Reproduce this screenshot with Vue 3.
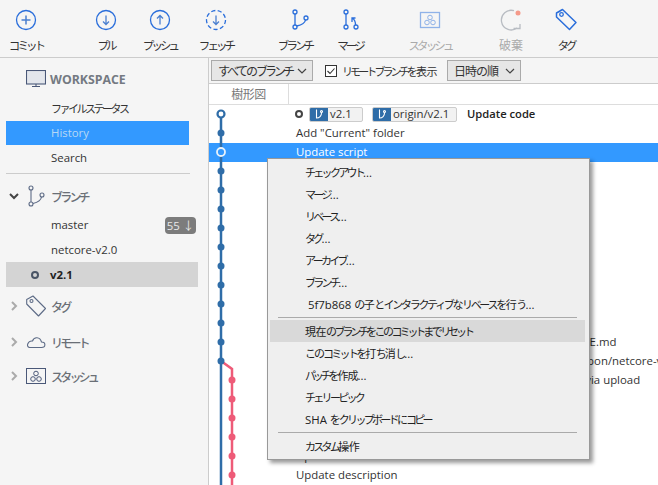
<script setup>
const parts = (s) =>
  s.split(/([\u4e00-\u9fff]+|[\u3040-\u309f]+|[\u30a0-\u30ff]+)/).filter(Boolean).map((t) => ({
    t,
    c: /[\u4e00-\u9fff]/.test(t) ? 'ja kj' : /[\u3040-\u309f]/.test(t) ? 'ja hi' : /[\u30a0-\u30ff]/.test(t) ? 'ja ka' : 'en',
  }))

const tools = [
  { id: 'commit', label: 'コミット', ml: 0 },
  { id: 'pull', label: 'プル', ml: 28 },
  { id: 'push', label: 'プッシュ', ml: 2 },
  { id: 'fetch', label: 'フェッチ', ml: 4 },
  { id: 'branch', label: 'ブランチ', ml: 27 },
  { id: 'merge', label: 'マージ', ml: 3 },
  { id: 'stash', label: 'スタッシュ', ml: 28, off: true },
  { id: 'discard', label: '破棄', ml: 29, off: true },
  { id: 'tag', label: 'タグ', ml: 3 },
]

const rows = [
  '', 'Add "Current" folder', 'Update script', '', '', '', '', '', '', '', '', '',
  'Merge pull request #12 from feature/doc-2 into README.md',
  'Merge pull request #8 from feature/dev2/add-mail-coupon/netcore-v2.1',
  'Create sample project and add more source code files via upload',
  '', '', '', 'Update', 'Update description',
]

const blueDots = [132, 170, 189, 208, 227, 246, 265, 284, 303, 322, 341, 360]
const pinkDots = [379, 398, 417, 436, 455, 474]

const menu = [
  { t: 'チェックアウト...' }, { t: 'マージ...' }, { t: 'リベース...' }, { t: 'タグ...' }, { t: 'アーカイブ...' }, { t: 'ブランチ...' },
  { t: ' 5f7b868 の子とインタラクティブなリベースを行う...', c: 'long' },
  null,
  { t: '現在のブランチをこのコミットまでリセット', c: 'hot' },
  { t: 'このコミットを打ち消し...' }, { t: 'パッチを作成...', c: 'tight' }, { t: 'チェリーピック' }, { t: 'SHA をクリップボードにコピー' },
  null,
  { t: 'カスタム操作' },
]
</script>

<template>
  <div class="app">
    <header class="toolbar">
      <div
        v-for="t in tools"
        :key="t.id"
        class="tool"
        :class="{ off: t.off }"
        :style="{ marginLeft: t.ml + 'px' }"
      >
        <svg class="ticon" width="40" height="30" viewBox="0 0 40 30" fill="none" stroke="#2a6edb" stroke-width="1.3">
          <template v-if="t.id === 'commit'">
            <circle cx="20" cy="15" r="9.5" />
            <path d="M20 10.5v9M15.5 15h9" stroke-width="1.5" stroke="#4a7fd0" />
          </template>
          <template v-else-if="t.id === 'pull'">
            <circle cx="20" cy="15" r="9.5" />
            <path d="M20 10.5v8.5M17 16.5l3 3 3-3" stroke="#4a7fd0" />
          </template>
          <template v-else-if="t.id === 'push'">
            <circle cx="20" cy="15" r="9.5" />
            <path d="M20 19.5v-9M17 13.5l3-3 3 3" stroke="#4a7fd0" />
          </template>
          <template v-else-if="t.id === 'fetch'">
            <circle cx="20" cy="15" r="9.5" stroke-dasharray="4.2 2.4" />
            <path d="M20 10.5v8.5M17 16.5l3 3 3-3" stroke="#4a7fd0" />
          </template>
          <template v-else-if="t.id === 'branch'">
            <circle cx="20" cy="7" r="2" />
            <circle cx="20" cy="22" r="2" />
            <circle cx="31" cy="13" r="2" />
            <path d="M20 9v11M21.8 21c5 -1 8.2-3 8.7-6" />
          </template>
          <template v-else-if="t.id === 'merge'">
            <circle cx="16" cy="7" r="2" />
            <circle cx="16" cy="22" r="2" />
            <circle cx="26" cy="22" r="2" />
            <path d="M16 9v11M25.500 20c0-4-1-5.500-3-6.500M22 17v-4h3.500" />
          </template>
          <template v-else-if="t.id === 'stash'">
            <rect x="10.500" y="7.500" width="19" height="15" stroke="#8fb2e8" />
            <g stroke="#8fb2e8" stroke-width="1">
              <circle cx="20" cy="12.500" r="2.300" />
              <circle cx="17" cy="17.500" r="2.300" />
              <circle cx="23" cy="17.500" r="2.300" />
            </g>
          </template>
          <template v-else-if="t.id === 'discard'">
            <path d="M23 5.700A9.800 9.800 0 1 0 26 23" stroke="#b8bcc2" stroke-width="1.300" />
            <path d="M22.500 23.500h6.500v-4.500" stroke="#b8bcc2" />
            <circle cx="27" cy="8" r="2.500" fill="#f59a8a" stroke="none" />
          </template>
          <template v-else>
            <path d="M10.500 8l6-3.500 13.500 13-6.500 7L10.500 12z" stroke-width="1.500" stroke-linejoin="round" />
            <circle cx="15.500" cy="9.500" r="1.800" />
          </template>
        </svg>
        <span class="tlabel"><span v-for="p in parts(t.label)" :key="p.t" :class="p.c">{{ p.t }}</span></span>
      </div>
    </header>

    <div class="body">
      <aside class="side">
        <div class="shead first">
          <svg class="sicon" width="20" height="18" viewBox="0 0 20 18" fill="none" stroke="#4a5878" stroke-width="1.100">
            <rect x=".5" y=".5" width="19" height="13.500" fill="#e3e6ec" />
            <path d="M10 14v2.500M6 16.500h8" />
          </svg>
          <span class="stitle en">WORKSPACE</span>
        </div>
        <div class="sitem"><span class="ja ka">ファイルステータス</span></div>
        <div class="sitem active"><span class="en">History</span></div>
        <div class="sitem search"><span class="en">Search</span></div>
        <div class="sdiv"></div>

        <div class="shead branch">
          <svg class="chev" width="12" height="12" viewBox="0 0 12 12" fill="none" stroke="#444" stroke-width="2">
            <path d="M2 4l4 4 4-4" />
          </svg>
          <svg class="sicon" width="18" height="22" viewBox="0 0 18 22" fill="none" stroke="#5d6b86" stroke-width="1.100">
            <circle cx="3" cy="3" r="2" />
            <circle cx="3" cy="19" r="2" />
            <circle cx="14" cy="10" r="2" />
            <path d="M3 5v12M5 18.500c4-1 8-3 8.500-6.500" />
          </svg>
          <span class="stitle ja ka">ブランチ</span>
        </div>
        <div class="sitem sub"><span class="en">master</span><span class="badge en">55 ↓</span></div>
        <div class="sitem sub two"><span class="en">netcore-v2.0</span></div>
        <div class="sitem cur"><i class="curdot"></i><span class="en">v2.1</span></div>

        <div class="shead tag">
          <svg class="chev" width="12" height="12" viewBox="0 0 12 12" fill="none" stroke="#aaa" stroke-width="2">
            <path d="M4 2l4 4-4 4" />
          </svg>
          <svg class="sicon" width="20" height="22" viewBox="0 0 20 22" fill="none" stroke="#5d6b86" stroke-width="1.100">
            <path d="M.7 4.500L7 1l12.500 12.500-7 7.500L.7 9z" stroke-linejoin="round" />
            <circle cx="5.500" cy="6" r="1.500" />
          </svg>
          <span class="stitle ja ka">タグ</span>
        </div>
        <div class="shead remote">
          <svg class="chev" width="12" height="12" viewBox="0 0 12 12" fill="none" stroke="#aaa" stroke-width="2">
            <path d="M4 2l4 4-4 4" />
          </svg>
          <svg class="sicon" width="20" height="22" viewBox="0 0 20 22" fill="none" stroke="#5d6b86" stroke-width="1.100">
            <path d="M3.500 16.500h12c4.500 0 4.500-5.500 0-5.500C14 5.500 8 5.500 6.500 10 2 9.500-.5 15.500 3.500 16.500z" />
          </svg>
          <span class="stitle ja ka">リモート</span>
        </div>
        <div class="shead stash">
          <svg class="chev" width="12" height="12" viewBox="0 0 12 12" fill="none" stroke="#aaa" stroke-width="2">
            <path d="M4 2l4 4-4 4" />
          </svg>
          <svg class="sicon" width="20" height="22" viewBox="0 0 20 22" fill="none" stroke="#4a5878" stroke-width="1">
            <rect x=".5" y="3.500" width="19" height="15" />
            <circle cx="10" cy="8.500" r="2.300" />
            <circle cx="7" cy="14" r="2.300" />
            <circle cx="13" cy="14" r="2.300" />
          </svg>
          <span class="stitle ja ka">スタッシュ</span>
        </div>
      </aside>

      <main class="main">
        <div class="filters">
          <div class="combo c1"><span><span class="ja hi">すべての</span><span class="ja ka">ブランチ</span></span><svg width="10" height="6" viewBox="0 0 10 6" fill="none" stroke="#444" stroke-width="1.200"><path d="M1 1l4 4 4-4" /></svg></div>
          <label class="check">
            <svg width="12" height="12" viewBox="0 0 12 12" fill="#fff" stroke="#333"><rect x=".5" y=".5" width="11" height="11" /><path d="M2.500 6l2.500 2.500 4.500-5" fill="none" stroke-width="1.100" /></svg>
            <span class="cktext"><span v-for="p in parts('リモートブランチを表示')" :key="p.t" :class="p.c">{{ p.t }}</span></span>
          </label>
          <div class="combo c2"><span class="ja date">日時の順</span><svg width="10" height="6" viewBox="0 0 10 6" fill="none" stroke="#444" stroke-width="1.200"><path d="M1 1l4 4 4-4" /></svg></div>
        </div>
        <div class="colhead"><div class="gcol ja">樹形図</div></div>

        <div class="list">
          <div v-for="(r, i) in rows" :key="i" class="row en" :class="{ sel: i === 2 }">
            <template v-if="i === 0">
              <i class="headring"></i>
              <span class="ref r1"><b><svg width="10" height="12" viewBox="0 0 10 12" fill="none" stroke="#fff" stroke-width="1.100"><path d="M2.500 1.500v9M2.500 10c3 0 5-2 5-5" /><circle cx="7.500" cy="3.500" r="1" /></svg></b><span>v2.1</span></span>
              <span class="ref r2"><b><svg width="10" height="12" viewBox="0 0 10 12" fill="none" stroke="#fff" stroke-width="1.100"><path d="M2.500 1.500v9M2.500 10c3 0 5-2 5-5" /><circle cx="7.500" cy="3.500" r="1" /></svg></b><span>origin/v2.1</span></span>
              <span class="msgb">Update code</span>
            </template>
            <template v-else>{{ r }}</template>
          </div>
          <svg class="graph" width="40" height="382" viewBox="0 104 40 382" fill="none">
            <path d="M12 113V485" stroke="#2f6da8" stroke-width="2.500" />
            <path d="M12 360l11 8V485" stroke="#ee5b78" stroke-width="2.500" />
            <circle cx="12" cy="113" r="3.500" fill="#fff" stroke="#2f6da8" stroke-width="2.200" />
            <circle cx="12" cy="151" r="4" fill="#3399ff" stroke="#e8f2fb" stroke-width="1.800" />
            <circle v-for="y in blueDots" :key="y" cx="12" :cy="y" r="3.500" fill="#2f6da8" />
            <circle v-for="y in pinkDots" :key="y" cx="23" :cy="y" r="3.500" fill="#ee5b78" />
          </svg>
        </div>
      </main>
    </div>

    <div class="menu">
      <template v-for="(m, i) in menu" :key="i">
        <div v-if="!m" class="sep"></div>
        <div v-else class="mitem" :class="m.c">
          <span v-for="p in parts(m.t)" :key="p.t + p.c" :class="p.c">{{ p.t }}</span>
        </div>
      </template>
    </div>
  </div>
</template>

<style>
html, body { margin: 0; background: #fff; }
</style>

<style scoped>
.app {
  position: relative;
  width: 658px;
  height: 485px;
  overflow: hidden;
  font-family: "Open Sans", "Noto Sans CJK JP", sans-serif;
  font-size: 11.4px;
  color: #333;
  display: flex;
  flex-direction: column;
  background: #fff;
}
.ja {
  font-family: "Noto Sans CJK JP", sans-serif;
  font-size: 11px;
  white-space: pre;
}
.ka { letter-spacing: -2.500px; }
.hi { letter-spacing: -1.800px; }
.kj { letter-spacing: -.5px; }
.en {
  font-family: "Open Sans", "Noto Sans CJK JP", sans-serif;
  white-space: pre;
}
.toolbar {
  height: 57px;
  flex: none;
  display: flex;
  background: #f5f5f5;
  border-bottom: 1px solid #ccc;
}
.tool {
  width: 52px;
  flex: none;
  display: flex;
  flex-direction: column;
  align-items: center;
  color: #333;
  padding-top: 5px;
}
.ticon { display: block; flex: none; }
.tlabel { margin-top: 1px; line-height: 18px; white-space: nowrap; }
.tlabel .ka { font-size: 11.500px; letter-spacing: -2.900px; }
.tlabel .kj { font-size: 12px; letter-spacing: 0; }
.tool.off .tlabel { color: #aaa; }

.body { flex: 1; display: flex; min-height: 0; }
.side {
  flex: none;
  background: #f5f5f5;
  border-right: 1px solid #ccc;
  padding-left: 6px;
  box-sizing: border-box;
  width: 209px;
  color: #333;
}
.shead {
  display: flex;
  align-items: center;
  height: 24px;
  position: relative;
}
.shead.first { margin-top: 9px; padding-left: 20px; }
.first .sicon { margin-right: 4px; }
.sicon { flex: none; display: block; }
.stitle { font-weight: 700; font-size: 12.300px; color: #747a82; }
.stitle.ja { font-size: 12px; letter-spacing: -2.800px; font-weight: 500; color: #6a6f76; }
.sitem {
  height: 24px;
  line-height: 24px;
  padding-left: 45px;
  width: 183px;
  box-sizing: border-box;
}
.shead.first + .sitem { margin-top: 5px; }
.sitem.active { background: #3399ff; color: #b8d8f5; margin-top: 1px; }
.sitem.search { margin-top: 1px; }
.sdiv { width: 184px; height: 1px; background: #ccc; margin-top: 3px; }
.branch { margin-top: 10px; }
.chev { flex: none; margin-left: 2px; }
.branch .sicon { margin-left: 8px; margin-right: 5px; }
.tag .sicon, .remote .sicon, .stash .sicon { margin-left: 6px; margin-right: 5px; }
.sitem.sub {
  width: 190px;
  display: flex;
  justify-content: space-between;
  align-items: center;
}
.shead.branch + .sitem.sub { margin-top: 5px; }
.sitem.two { margin-top: 1px; }
.badge {
  width: 31px;
  height: 17px;
  line-height: 17px;
  border-radius: 4px;
  background: #7c7c7c;
  color: #e8e8e8;
  text-align: center;
}
.sitem.cur {
  width: 192px;
  height: 25px;
  background: #d4d4d4;
  font-weight: 700;
  color: #222;
  display: flex;
  align-items: center;
  padding-left: 25px;
}
.curdot {
  width: 4px;
  height: 4px;
  border: 2.500px solid #4a5566;
  border-radius: 50%;
  margin-right: 11px;
}
.tag { margin-top: 7px; }
.remote { margin-top: 12px; }
.stash { margin-top: 10px; }

.main { flex: 1; min-width: 0; display: flex; flex-direction: column; }
.filters {
  height: 25px;
  flex: none;
  display: flex;
  align-items: center;
  background: #f5f5f5;
  border-bottom: 1px solid #ccc;
  padding-left: 2px;
}
.combo {
  height: 21px;
  box-sizing: border-box;
  border: 1px solid #aaa;
  background: #e6e6e6;
  display: flex;
  align-items: center;
  justify-content: space-between;
  padding: 0 5px 0 6px;
}
.combo .ja { font-size: 12px; }
.combo .ka { letter-spacing: -3px; }
.combo .hi { letter-spacing: -2.200px; }
.combo .date { letter-spacing: -1px; }
.c1 { width: 102px; }
.c2 { width: 74px; margin-left: 12px; }
.check { display: flex; align-items: center; gap: 5px; margin-left: 12px; width: 110px; flex: none; }
.check svg { flex: none; }
.cktext { white-space: nowrap; flex: none; }
.cktext .ka { letter-spacing: -2.900px; }
.colhead {
  height: 20px;
  flex: none;
  border-bottom: 1px solid #ddd;
  background: #fff;
}
.gcol {
  width: 79px;
  height: 20px;
  line-height: 20px;
  text-align: center;
  border-right: 1px solid #ddd;
  color: #777;
  font-size: 12px;
  letter-spacing: -.5px;
}
.list { position: relative; flex: 1; overflow: hidden; }
.row {
  height: 19px;
  line-height: 18px;
  padding-left: 87px;
  padding-bottom: 1px;
  box-sizing: border-box;
  display: flex;
  align-items: center;
  white-space: nowrap;
}
.row.sel { background: #3399ff; color: #fff; }
.graph { position: absolute; left: 0; top: 0; }
.headring {
  width: 4px;
  height: 4px;
  border: 2.500px solid #444;
  border-radius: 50%;
  margin-left: -1px;
  margin-right: 6px;
}
.ref {
  display: flex;
  height: 15px;
  box-sizing: border-box;
  border: 1px solid #ccc;
  border-radius: 2px;
  background: #f2f2f2;
  align-items: center;
  overflow: hidden;
}
.ref b {
  width: 18px;
  height: 15px;
  background: #2f6da8;
  display: flex;
  align-items: center;
  justify-content: center;
  flex: none;
}
.ref span { padding-left: 2px; }
.r1 { width: 54px; }
.r2 { width: 85px; margin-left: 9px; }
.msgb { font-weight: 600; font-size: 11.200px; margin-left: 10px; color: #222; }

.menu {
  position: absolute;
  left: 267px;
  top: 158px;
  width: 323px;
  height: 302px;
  box-sizing: border-box;
  border: 1.500px solid #999;
  background: #efefef;
  box-shadow: 3px 3px 4px rgba(0, 0, 0, .4);
  padding: 1.500px 3px 0 2px;
  color: #222;
}
.mitem {
  height: 22px;
  line-height: 22px;
  width: 315px;
  padding-left: 35px;
  box-sizing: border-box;
  white-space: nowrap;
}
.mitem .ka { letter-spacing: -2.700px; }
.mitem .hi { letter-spacing: -2px; }
.mitem.long .ka { letter-spacing: -2.300px; }
.mitem.long .hi { letter-spacing: -1.600px; }
.mitem.hot { background: #d9d9d9; }
.mitem.hot .ka { letter-spacing: -3.100px; }
.mitem.hot .hi { letter-spacing: -2.500px; }
.mitem.tight .ka { letter-spacing: -3.200px; }
.mitem.tight .kj { letter-spacing: -1px; }
.sep {
  height: 1px;
  margin: 2px 0 2px 8px;
  width: 299px;
  background: #aaa;
}
</style>
